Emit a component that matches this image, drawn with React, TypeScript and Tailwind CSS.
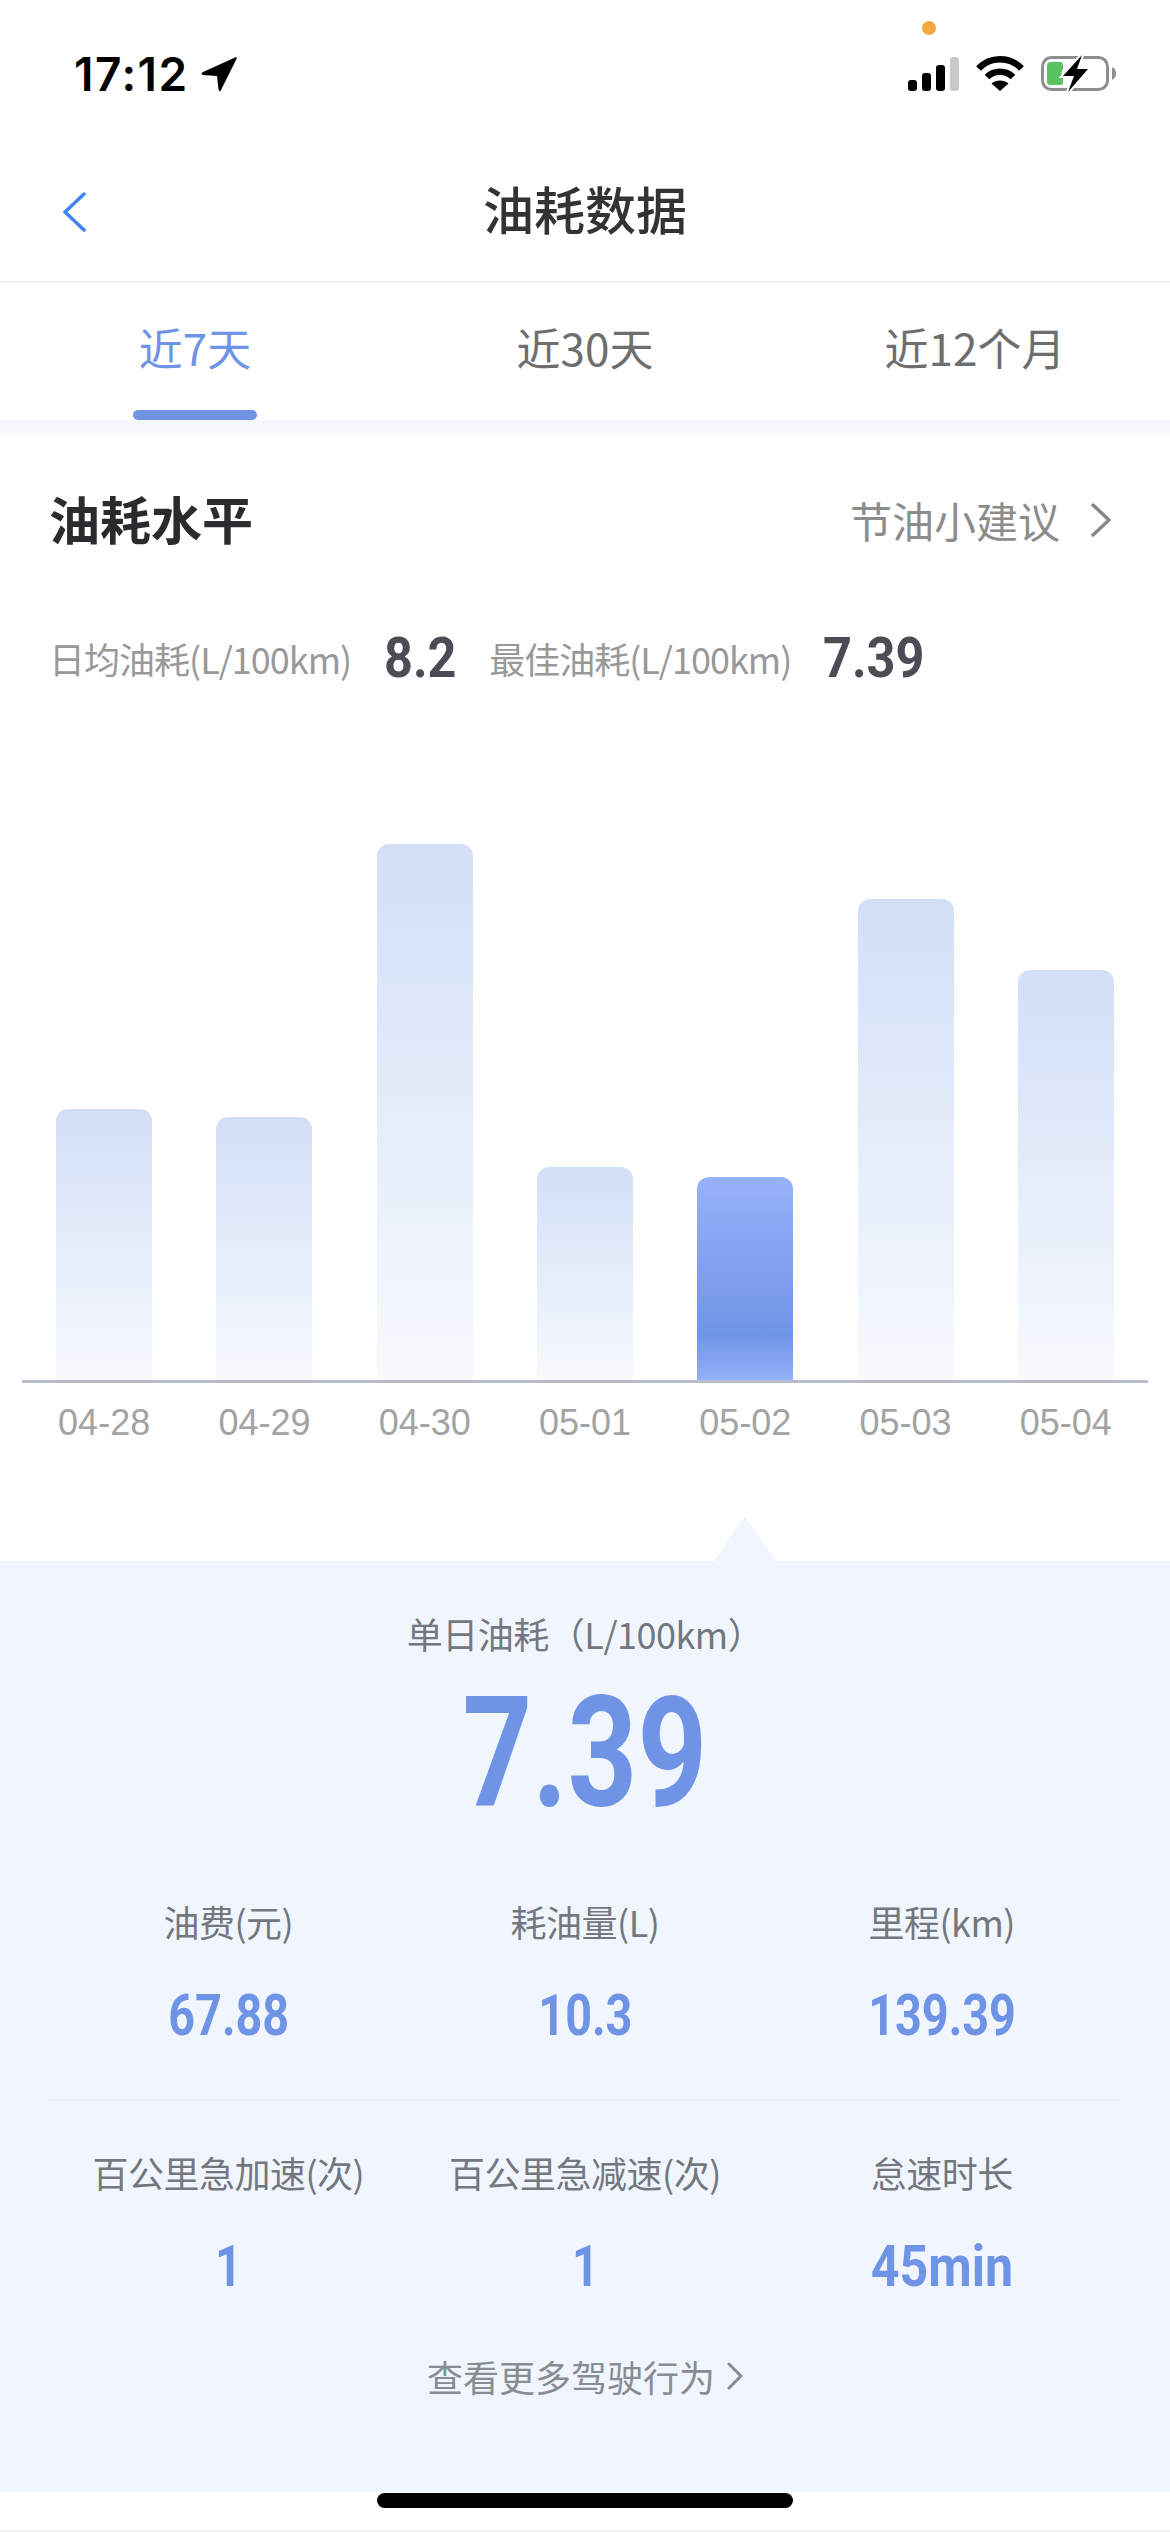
const days = [
  { label: '04-28', height: 271 },
  { label: '04-29', height: 263 },
  { label: '04-30', height: 536 },
  { label: '05-01', height: 213 },
  { label: '05-02', height: 203, active: true },
  { label: '05-03', height: 481 },
  { label: '05-04', height: 410 },
]

const topStats = [
  { label: '油费(元)', value: '67.88', squeeze: 'scale-x-[0.82]' },
  { label: '耗油量(L)', value: '10.3', squeeze: 'scale-x-[0.82]' },
  { label: '里程(km)', value: '139.39', squeeze: 'scale-x-[0.82]' },
]

const bottomStats = [
  { label: '百公里急加速(次)', value: '1', squeeze: 'scale-x-[0.82]' },
  { label: '百公里急减速(次)', value: '1', squeeze: 'scale-x-[0.82]' },
  { label: '怠速时长', value: '45min', squeeze: 'scale-x-[0.88]' },
]

function StatusBar() {
  return (
    <div className="relative flex h-[136px] items-start justify-between pt-[55px] pr-[53px] pl-[74px]">
      <div className="flex items-center gap-[12px]">
        <span className="font-['Inter',sans-serif] text-[46px] leading-[38px] font-semibold tracking-[1.5px] text-black">17:12</span>
        {/* location arrow */}
        <svg className="h-[36px] w-[36px]" viewBox="0 0 36 36" fill="black">
          <path d="M34 1.5 Q36 0 35.5 3 L20 34 Q18 37 17.5 33 L16 20 L2 19 Q-1 18 2 16 Z" />
        </svg>
      </div>
      <span className="absolute top-[21px] left-[922px] h-[14px] w-[14px] rounded-full bg-[#f3a73f]" />
      <div className="flex items-start">
        {/* signal */}
        <svg className="mt-[2px] h-[34px] w-[51px]" viewBox="0 0 51 34">
          <rect x="0" y="23" width="9" height="11" rx="3" fill="black" />
          <rect x="14" y="16" width="9" height="18" rx="3" fill="black" />
          <rect x="28" y="8" width="9" height="26" rx="3" fill="black" />
          <rect x="42" y="0" width="9" height="34" rx="3" fill="#c9c9c9" />
        </svg>
        {/* wifi */}
        <svg className="ml-[17px] h-[36px] w-[48px]" viewBox="0 0 48 36" fill="none" stroke="black" strokeWidth="6.5">
          <path d="M2.5 13.5 C14 1 34 1 45.5 13.5" />
          <path d="M11 22 C18 15 30 15 37 22" />
          <path d="M24 36 L15.5 28.5 C20 24.5 28 24.5 32.5 28.5 Z" fill="black" stroke="none" />
        </svg>
        {/* battery, charging */}
        <svg className="ml-[17px] h-[37px] w-[76px]" viewBox="0 0 76 37">
          <rect x="1.5" y="2.5" width="65" height="32" rx="9" fill="none" stroke="#8e8e8e" strokeWidth="3" />
          <path d="M71 12 Q75 14 75 18.5 Q75 23 71 25 Z" fill="#8e8e8e" />
          <path d="M10 7 H19 Q22 7 22 10 V14 Q19 18 22 22 V27 Q22 30 19 30 H10 Q6 30 6 27 V10 Q6 7 10 7 Z" fill="#5cc160" />
          <path d="M41 0 L22 21 H33 L27 37 L47 14 H36 Z" fill="white" stroke="white" strokeWidth="4" />
          <path d="M41 0 L22 21 H33 L27 37 L47 14 H36 Z" fill="black" />
        </svg>
      </div>
    </div>
  )
}

function NavBar() {
  return (
    <div className="relative flex h-[147px] items-center justify-center border-b-2 border-[#f0f0f0]">
      <svg className="absolute top-[56px] left-[62px] h-[40px] w-[25px]" viewBox="0 0 25 40" fill="none" stroke="#3f85ee" strokeWidth="3.5" strokeLinecap="round" strokeLinejoin="round">
        <path d="M22 2 L3 20 L22 38" />
      </svg>
      <h1 className="text-[51px] leading-none font-medium text-[#333333]">油耗数据</h1>
    </div>
  )
}

function Tabs() {
  return (
    <div className="grid h-[137px] grid-cols-3">
      <div className="relative flex items-start justify-center pt-[36px] text-[44px] leading-[56px] text-[#6f94e6]">
        近7天
        <span className="absolute bottom-0 left-[133px] h-[10px] w-[124px] rounded-full bg-[#6f94e6]" />
      </div>
      <div className="flex items-start justify-center pt-[36px] text-[44px] leading-[56px] text-[#6e6e6e]">近30天</div>
      <div className="flex items-start justify-center pt-[36px] text-[44px] leading-[56px] text-[#6e6e6e]">近12个月</div>
    </div>
  )
}

// DIN-like figures: squeezed Roboto
function Numeral({ children, className }: { children: React.ReactNode; className: string }) {
  return <span className={`inline-block font-['Roboto',sans-serif] ${className}`}>{children}</span>
}

function Summary() {
  return (
    <section className="pr-[58px] pl-[49px]">
      <div className="flex h-[50px] items-center justify-between">
        <h2 className="text-[51px] leading-none font-bold text-[#2b2b2e]">油耗水平</h2>
        <div className="mt-[3px] flex items-center text-[42px] leading-none text-[#8c8c8c]">
          节油小建议
          <svg className="ml-[30px] h-[34px] w-[22px]" viewBox="0 0 22 34" fill="none" stroke="#888888" strokeWidth="3.5" strokeLinecap="round" strokeLinejoin="round">
            <path d="M3 2 L19 17 L3 32" />
          </svg>
        </div>
      </div>
      <div className="mt-[90px] flex h-[50px] items-center text-[36px] leading-none tracking-[-1px] text-[#999999]">
        <span>日均油耗(L/100km)</span>
        <Numeral className="ml-[33px] w-[72px] origin-left scale-x-[0.9] text-[56px] leading-none font-bold tracking-normal text-[#4b4c55]">8.2</Numeral>
        <span className="ml-[33px]">最佳油耗(L/100km)</span>
        <Numeral className="ml-[32px] origin-left scale-x-[0.9] text-[56px] leading-none font-bold tracking-normal text-[#4b4c55]">7.39</Numeral>
      </div>
    </section>
  )
}

function Chart() {
  return (
    <section className="mx-[22px] mt-[161px]">
      <div className="grid h-[536px] grid-cols-7 items-end px-[2px]">
        {days.map((d) => (
          <div key={d.label} className="flex justify-center">
            <div
              style={{ height: d.height }}
              className={
                d.active
                  ? 'w-[96px] rounded-t-[12px] bg-linear-to-b from-[#96b2fa] via-[#7094e5] via-78% to-[#93b1f9]'
                  : 'w-[96px] rounded-t-[12px] bg-linear-to-b from-[#d3dff7] to-[#f7fafe]'
              }
            />
          </div>
        ))}
      </div>
      <div className="h-[3px] bg-[#b9bccb]" />
      <div className="mt-[20px] grid grid-cols-7 px-[2px]">
        {days.map((d) => (
          <span key={d.label} className="text-center font-['Liberation_Sans',sans-serif] text-[36px] leading-[40px] text-[#a3a3a3]">
            {d.label}
          </span>
        ))}
      </div>
    </section>
  )
}

function StatGrid({ items, className }: { items: { label: string; value: string; squeeze: string }[]; className: string }) {
  return (
    <div className={`grid grid-cols-3 ${className}`}>
      {items.map((s) => (
        <div key={s.label} className="flex flex-col items-center">
          <span className="text-[36px] leading-[44px] tracking-[-0.5px] text-[#74777f]">{s.label}</span>
          <Numeral className={`mt-[48px] text-[57px] leading-[50px] font-bold text-[#6f94e6] ${s.squeeze}`}>{s.value}</Numeral>
        </div>
      ))}
    </div>
  )
}

function DetailPanel() {
  return (
    <section className="relative mt-[118px] h-[931px] bg-[#f1f6fe] px-[50px] pt-[48px]">
      <div className="absolute -top-[45px] left-[714px] h-0 w-0 border-x-[31px] border-b-[45px] border-x-transparent border-b-[#f1f6fe]" />
      <div className="text-center text-[36px] leading-[48px] tracking-[-0.5px] text-[#74777f]">单日油耗（L/100km）</div>
      <div className="mt-[31px] flex justify-center">
        <Numeral className="scale-x-[0.79] text-[154px] leading-[132px] font-bold text-[#6f94e6]">7.39</Numeral>
      </div>
      <StatGrid items={topStats} className="mt-[79px]" />
      <div className="mt-[58px] h-[2px] bg-[#edf0f6]" />
      <StatGrid items={bottomStats} className="mt-[49px]" />
      <div className="mt-[62px] flex items-center justify-center text-[36px] leading-[44px] text-[#888c94]">
        查看更多驾驶行为
        <svg className="ml-[12px] h-[28px] w-[16px]" viewBox="0 0 16 28" fill="none" stroke="#888c94" strokeWidth="3" strokeLinecap="round" strokeLinejoin="round">
          <path d="M2 2 L14 14 L2 26" />
        </svg>
      </div>
    </section>
  )
}

export default function App() {
  return (
    <div className="flex h-[2532px] w-[1170px] flex-col overflow-hidden bg-white font-['Noto_Sans_CJK_SC',sans-serif]">
      <StatusBar />
      <NavBar />
      <Tabs />
      <div className="h-[20px] bg-linear-to-b from-[#f3f6fc] to-white" />
      <div className="mt-[53px]">
        <Summary />
        <Chart />
      </div>
      <DetailPanel />
      <div className="flex justify-center">
        <span className="mt-px h-[15px] w-[416px] rounded-full bg-black" />
      </div>
      <div className="mt-auto h-[2px] bg-[#f0f0f0]" />
    </div>
  )
}
